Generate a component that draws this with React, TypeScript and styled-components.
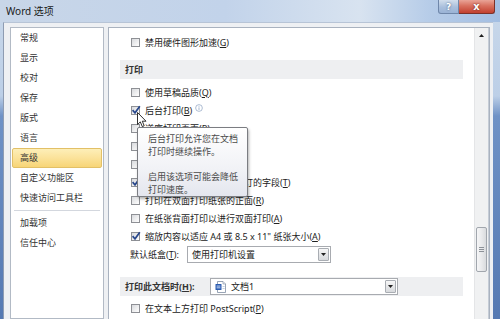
import styled, { createGlobalStyle } from "styled-components";

const GlobalStyle = createGlobalStyle`
    html, body {
        margin: 0;
        padding: 0;
        background: #ffffff;
    }
    body {
        font-family: "Noto Sans", "Noto Sans CJK SC", sans-serif;
    }
`;

interface OptionRow {
    label: string;
    key: string;
    checked?: boolean;
    info?: boolean;
}

const navItems = ["常规", "显示", "校对", "保存", "版式", "语言", "高级", "自定义功能区", "快速访问工具栏"];
const navExtra = ["加载项", "信任中心"];

const printOptions: OptionRow[] = [
    { label: "使用草稿品质", key: "Q" },
    { label: "后台打印", key: "B", checked: true, info: true },
    { label: "逆序打印页面", key: "R" },
    { label: "打印 XML 标记", key: "X" },
    { label: "打印域代码而非域值", key: "F" },
    { label: "允许在打印前更新包含修订的字段", key: "T", checked: true },
    { label: "打印在双面打印纸张的正面", key: "R" },
    { label: "在纸张背面打印以进行双面打印", key: "A" },
    { label: "缩放内容以适应 A4 或 8.5 x 11\" 纸张大小", key: "A", checked: true },
];

function CheckBox({ checked }: { checked?: boolean }) {
    return (
        <Box>
            {checked && (
                <CheckMark viewBox="0 0 10 10">
                    <path d="M1.6 5.2 L4 7.8 L8.8 1.2" fill="none" stroke="#27478c" strokeWidth="1.7" />
                </CheckMark>
            )}
        </Box>
    );
}

function Option({ label, accel, checked, info }: { label: string; accel: string; checked?: boolean; info?: boolean }) {
    return (
        <Row>
            <CheckBox checked={checked} />
            <span>
                {label}(<u>{accel}</u>)
            </span>
            {info && (
                <InfoIcon viewBox="0 0 10 10">
                    <circle cx="5" cy="5" r="4.2" fill="none" stroke="#8ea3c2" strokeWidth="0.9" />
                    <rect x="4.5" y="4.2" width="1" height="3.2" fill="#8ea3c2" />
                    <rect x="4.5" y="2.4" width="1" height="1" fill="#8ea3c2" />
                </InfoIcon>
            )}
        </Row>
    );
}

function DropArrow() {
    return (
        <DropButton>
            <svg width="5" height="3" viewBox="0 0 5 3">
                <path d="M0 0 H5 L2.5 3 Z" fill="#222" />
            </svg>
        </DropButton>
    );
}

function App() {
    return (
        <>
            <GlobalStyle />
            <Window>
                <TitleBar>
                    <Title>Word 选项</Title>
                    <Captions>
                        <HelpButton>?</HelpButton>
                        <CloseButton>x</CloseButton>
                    </Captions>
                </TitleBar>
                <Body>
                    <NavList>
                        {navItems.map((item) => (
                            <NavItem key={item} active={item === "高级"}>
                                {item}
                            </NavItem>
                        ))}
                        <NavSeparator />
                        {navExtra.map((item) => (
                            <NavItem key={item}>{item}</NavItem>
                        ))}
                    </NavList>
                    <Pane>
                        <Content>
                            <Option label="禁用硬件图形加速" accel="G" />
                            <SectionHeader>打印</SectionHeader>
                            <OptionGroup>
                                {printOptions.map((o, i) => (
                                    <Option key={i} label={o.label} accel={o.key} checked={o.checked} info={o.info} />
                                ))}
                            </OptionGroup>
                            <TrayRow>
                                <TrayLabel>
                                    默认纸盒(<u>T</u>):
                                </TrayLabel>
                                <Select width={144}>
                                    <SelectText>使用打印机设置</SelectText>
                                    <DropArrow />
                                </Select>
                            </TrayRow>
                            <DocHeader>
                                <DocLabel>
                                    打印此文档时(<u>H</u>):
                                </DocLabel>
                                <Select width={188}>
                                    <SelectText>
                                        <DocIcon viewBox="0 0 11 12">
                                            <path d="M2.5 0.5 H8 L10.5 3 V11.5 H2.5 Z" fill="#fff" stroke="#7f8ea3" strokeWidth="0.8" />
                                            <path d="M8 0.5 V3 H10.5" fill="#e6ecf4" stroke="#7f8ea3" strokeWidth="0.6" />
                                            <rect x="0.5" y="3" width="6" height="6" rx="0.6" fill="#2a5bb0" />
                                            <rect x="1.6" y="4.6" width="3.8" height="0.9" fill="#dbe7fa" />
                                            <rect x="1.6" y="6.4" width="3.8" height="0.9" fill="#dbe7fa" />
                                            <rect x="7.5" y="5" width="2.2" height="0.6" fill="#9fb3d1" />
                                            <rect x="7.5" y="7" width="2.2" height="0.6" fill="#9fb3d1" />
                                        </DocIcon>
                                        文档1
                                    </SelectText>
                                    <DropArrow />
                                </Select>
                            </DocHeader>
                            <LastRow>
                                <CheckBox />
                                <span>
                                    在文本上方打印 PostScript(<u>P</u>)
                                </span>
                            </LastRow>
                        </Content>
                        <ScrollBar>
                            <ScrollArrow>
                                <svg width="5" height="3" viewBox="0 0 5 3">
                                    <path d="M0 3 H5 L2.5 0 Z" fill="#1e1e1e" />
                                </svg>
                            </ScrollArrow>
                            <Thumb>
                                <Grip />
                                <Grip />
                                <Grip />
                            </Thumb>
                        </ScrollBar>
                    </Pane>
                </Body>
                <Tooltip>
                    <TipPara>
                        后台打印允许您在文档
                        <br />
                        打印时继续操作。
                    </TipPara>
                    <TipPara>
                        启用该选项可能会降低
                        <br />
                        打印速度。
                    </TipPara>
                </Tooltip>
                <Cursor viewBox="0 0 10 16">
                    <path d="M0.5 0.5 V12.5 L3.3 9.9 L5.3 14.6 L7.2 13.8 L5.3 9.2 H9 Z" fill="#fff" stroke="#1a1a1a" strokeWidth="0.9" />
                </Cursor>
            </Window>
        </>
    );
}

const Window = styled.div`
    position: relative;
    width: 500px;
    height: 319px;
    overflow: hidden;
    display: flex;
    flex-direction: column;
    background: linear-gradient(180deg, #c9d8ea 0px, #bccfe7 96px, #6f92c6 116px, #5579b2 319px);
    font-family: "Noto Sans", "Noto Sans CJK SC", sans-serif;
    font-size: 9px;
    color: #1e1e1e;
`;

const TitleBar = styled.div`
    flex: none;
    height: 22px;
    display: flex;
    align-items: flex-start;
    justify-content: space-between;
    background: linear-gradient(90deg, #c8d6e8 0%, #c2d3ea 45%, #d8e3f0 72%, #b6cce8 86%, #a3bee2 100%);
`;

const Title = styled.span`
    font-size: 10px;
    line-height: 22px;
    padding-left: 6px;
    color: #1a1a1a;
`;

const Captions = styled.div`
    display: flex;
    margin-right: 5px;
`;

const CaptionButton = styled.div`
    height: 14px;
    display: flex;
    align-items: center;
    justify-content: center;
    color: #ffffff;
    font-family: "DejaVu Sans", sans-serif;
    font-weight: bold;
    box-sizing: border-box;
`;

const HelpButton = styled(CaptionButton)`
    width: 21px;
    font-size: 9px;
    border: 1px solid #6f87aa;
    border-top: none;
    border-radius: 0 0 0 3px;
    background: linear-gradient(180deg, #d2deec 0%, #a9bfdc 55%, #9ab3d6 100%);
    text-shadow: 0 0 2px #3d5678;
`;

const CloseButton = styled(CaptionButton)`
    width: 36px;
    font-size: 10px;
    border: 1px solid #7c3129;
    border-top: none;
    border-left: none;
    border-radius: 0 0 3px 0;
    background: linear-gradient(180deg, #e9a497 0%, #d8705f 45%, #c2402f 100%);
    text-shadow: 0 0 2px #5a1a12;
`;

const Body = styled.div`
    flex: 1;
    min-height: 0;
    display: flex;
    gap: 4px;
    margin: 0 7px 0 3px;
    padding: 4px 3px 0 6px;
    background: #eef0f3;
    border-left: 1px solid #8e9cb2;
    border-top: 1px solid #b7c4d6;
`;

const NavList = styled.div`
    flex: none;
    width: 94px;
    box-sizing: border-box;
    border: 1px solid #b2bac5;
    background: #ffffff;
    color: #333333;
`;

const NavItem = styled.div<{ active?: boolean }>`
    height: 20px;
    line-height: 18px;
    margin: 0 1px;
    padding-left: 7px;
    box-sizing: border-box;
    border: 1px solid ${({ active }) => (active ? "#e2c067" : "transparent")};
    border-radius: 2px;
    background: ${({ active }) => (active ? "linear-gradient(180deg, #fdefb8 0%, #fbe29a 50%, #f7d577 100%)" : "transparent")};
`;

const NavSeparator = styled.div`
    height: 1px;
    margin: 2px 3px;
    background: #d3d7de;
`;

const Pane = styled.div`
    flex: 1;
    min-width: 0;
    display: flex;
    border: 1px solid #a9b2bf;
    border-bottom: none;
    background: #ffffff;
`;

const Content = styled.div`
    flex: 1;
    padding: 5px 11px 0 11px;
    color: #222222;
`;

const Row = styled.div`
    height: 18px;
    display: flex;
    align-items: center;
    padding-left: 11px;
    white-space: nowrap;
`;

const OptionGroup = styled.div`
    margin-top: 4px;
`;

const LastRow = styled(Row)`
    margin-top: 3px;
`;

const Box = styled.span`
    position: relative;
    flex: none;
    width: 9px;
    height: 9px;
    margin-right: 5px;
    box-sizing: border-box;
    border: 1px solid #8e9095;
    background: linear-gradient(135deg, #d8dadd 0%, #f4f4f5 70%, #ffffff 100%);
`;

const CheckMark = styled.svg`
    position: absolute;
    left: -1px;
    top: -2px;
    width: 10px;
    height: 10px;
`;

const InfoIcon = styled.svg`
    width: 8px;
    height: 8px;
    margin-left: 3px;
    margin-top: -4px;
`;

const SectionHeader = styled.div`
    height: 19px;
    margin-top: 9px;
    padding-left: 5px;
    display: flex;
    align-items: center;
    background: #eeeff1;
    font-weight: bold;
    color: #333333;
`;

const TrayRow = styled.div`
    height: 19px;
    display: flex;
    align-items: center;
    padding-left: 10px;
    white-space: nowrap;
`;

const TrayLabel = styled.span`
    width: 57px;
    flex: none;
`;

const DocHeader = styled(SectionHeader)`
    margin-top: 13px;
`;

const DocLabel = styled.span`
    width: 85px;
    flex: none;
`;

const Select = styled.div<{ width: number }>`
    width: ${({ width }) => width}px;
    height: 17px;
    box-sizing: border-box;
    display: flex;
    align-items: center;
    justify-content: space-between;
    border: 1px solid #a8abb0;
    background: #ffffff;
    font-weight: normal;
    padding-right: 1px;
`;

const SelectText = styled.span`
    display: flex;
    align-items: center;
    padding-left: 4px;
    color: #222222;
`;

const DocIcon = styled.svg`
    width: 11px;
    height: 12px;
    margin-right: 5px;
`;

const DropButton = styled.span`
    width: 11px;
    height: 13px;
    box-sizing: border-box;
    display: flex;
    align-items: center;
    justify-content: center;
    border: 1px solid #a9adb3;
    border-radius: 1px;
    background: linear-gradient(180deg, #f7f7f7 0%, #e6e7e9 50%, #d8dadd 100%);
`;

const ScrollBar = styled.div`
    flex: none;
    width: 13px;
    display: flex;
    flex-direction: column;
    align-items: center;
    background: #f0f1f2;
    border-left: 1px solid #e4e5e7;
    border-right: 1px solid #c5ccd6;
`;

const ScrollArrow = styled.div`
    height: 14px;
    display: flex;
    align-items: center;
`;

const Thumb = styled.div`
    width: 11px;
    height: 45px;
    margin-top: 185px;
    box-sizing: border-box;
    border: 1px solid #a1a6ad;
    border-radius: 2px;
    background: linear-gradient(90deg, #f6f6f7 0%, #e9eaec 50%, #d9dbde 100%);
    display: flex;
    flex-direction: column;
    align-items: center;
    justify-content: center;
    gap: 1px;
`;

const Grip = styled.span`
    width: 5px;
    height: 1px;
    background: #8c9198;
`;

const Tooltip = styled.div`
    position: absolute;
    left: 137px;
    top: 127px;
    width: 111px;
    height: 70px;
    box-sizing: border-box;
    padding: 4px 6px 2px 10px;
    border: 1px solid #7b7d82;
    border-radius: 2px;
    background: linear-gradient(180deg, #ffffff 0%, #f1f2f6 60%, #e4e6ee 100%);
    box-shadow: 1px 2px 3px rgba(0, 0, 0, 0.3);
    color: #4a4a4a;
    line-height: 13px;
    white-space: nowrap;
`;

const TipPara = styled.div`
    & + & {
        margin-top: 12px;
    }
`;

const Cursor = styled.svg`
    position: absolute;
    left: 137px;
    top: 112px;
    width: 10px;
    height: 16px;
`;

export default App;
